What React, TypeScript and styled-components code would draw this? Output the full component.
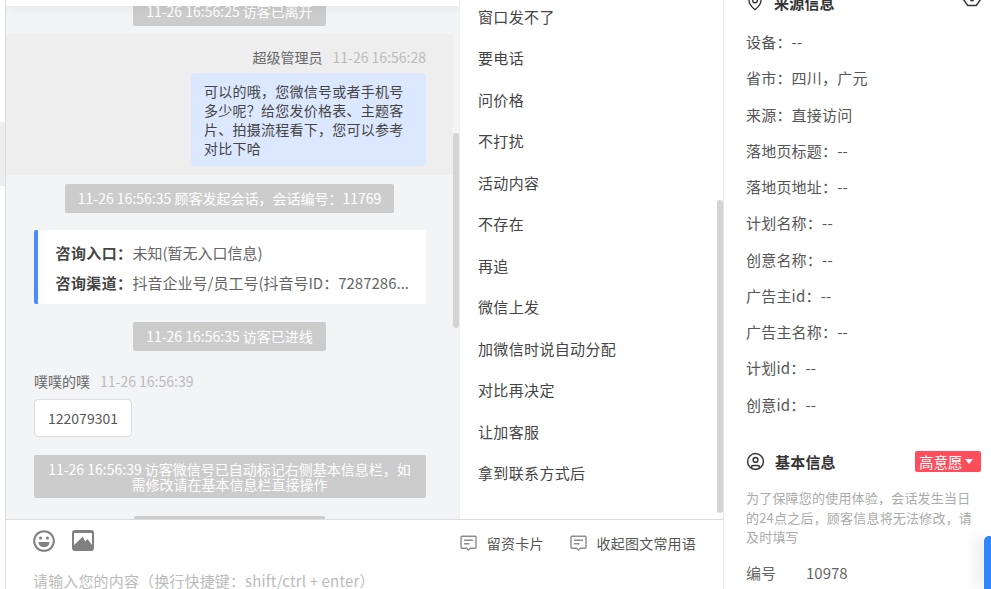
import { createGlobalStyle, styled } from 'styled-components'
import { CircleUser, MapPin } from 'lucide-react'

const GlobalStyle = createGlobalStyle`
  html, body {
    margin: 0;
    padding: 0;
    background: #fff;
  }
  body {
    font-family: "Noto Sans CJK SC", "Noto Sans", sans-serif;
  }
`

const Page = styled.div`
  position: relative;
  display: flex;
  width: 991px;
  height: 589px;
  overflow: hidden;
  background: #fff;
`

const Gutter = styled.div`
  flex: 0 0 5px;
  padding-top: 122px;
`

const GutterMark = styled.div`
  height: 64px;
  background: #eee;
`

const Center = styled.div`
  flex: 0 0 719px;
  display: flex;
  flex-direction: column;
  box-sizing: border-box;
  border-left: 1px solid #ddd;
  border-right: 1px solid #e4e4e4;
`

const Panes = styled.div`
  flex: 0 0 519px;
  display: flex;
  overflow: hidden;
`

const Chat = styled.div`
  position: relative;
  flex: 0 0 453px;
  overflow: hidden;
  background: #f3f4f6;
`

const TopShade = styled.div`
  position: relative;
  z-index: 2;
  height: 6px;
  background: #fff;
  box-shadow: 0 2px 8px rgba(0, 0, 0, 0.08);
`

// scrolled list: the first tag sits partly under the top shade
const Messages = styled.div`
  display: flex;
  flex-direction: column;
  align-items: center;
  width: 447px;
  margin-top: -9px;
`

const ChatThumb = styled.div`
  position: absolute;
  top: 133px;
  right: 0;
  width: 6px;
  height: 195px;
  border-radius: 3px;
  background: #d4d4d4;
`

const SysTag = styled.div<{ $wide?: boolean }>`
  box-sizing: border-box;
  flex: none;
  width: ${(p) => (p.$wide ? '392px' : 'auto')};
  min-width: 191px;
  min-height: 29px;
  margin-bottom: ${(p) => (p.$wide ? '18px' : '17px')};
  padding: 7px 13px;
  border-radius: 2px;
  background: #ccc;
  color: #fff;
  font-size: 14px;
  line-height: ${(p) => (p.$wide ? '14.5px' : '15px')};
  text-align: center;
`

const AdminBlock = styled.div`
  align-self: stretch;
  display: flex;
  flex-direction: column;
  align-items: flex-end;
  margin: -9px 0 9px;
  padding: 14px 27px 9px 0;
  background: #eee;
`

const Sender = styled.div<{ $right?: boolean }>`
  margin-bottom: ${(p) => (p.$right ? '6px' : '8px')};
  color: #666;
  font-size: 14px;
  line-height: 19px;
`

const Time = styled.span`
  margin-left: 10px;
  color: #bbb;
`

const Bubble = styled.div`
  box-sizing: border-box;
  width: 235px;
  padding: 9px 13px 8px;
  border-radius: 4px;
  background: #dbe8ff;
  color: #444;
  font-size: 14px;
  line-height: 19px;
  letter-spacing: 0.25px;
`

const EntryCard = styled.div`
  box-sizing: border-box;
  flex: none;
  width: 392px;
  height: 74px;
  margin-bottom: 18px;
  padding: 8px 18px 0;
  border-left: 4px solid #4a8cff;
  border-radius: 2px;
  background: #fff;
`

const EntryRow = styled.div`
  height: 30px;
  color: #666;
  font-size: 15px;
  line-height: 30px;
  white-space: nowrap;
  b {
    color: #444;
    font-weight: 700;
    letter-spacing: 0.4px;
  }
`

const VisitorBlock = styled.div`
  align-self: stretch;
  display: flex;
  flex-direction: column;
  align-items: flex-start;
  margin-bottom: 18px;
  padding: 4px 0 0 28px;
`

const PlainBubble = styled.div`
  box-sizing: border-box;
  width: 98px;
  height: 38px;
  border: 1px solid #ddd;
  border-radius: 4px;
  background: #fff;
  color: #555;
  font-size: 14px;
  line-height: 36px;
  text-align: center;
`

const Quick = styled.div`
  position: relative;
  flex: 1;
  overflow: hidden;
  background: #fff;
  border-left: 1px solid #eee;
`

const QuickList = styled.div`
  margin-top: -4.5px;
  padding-left: 18px;
`

const QuickItem = styled.div`
  height: 41.5px;
  color: #444;
  font-size: 15px;
  line-height: 41.5px;
  letter-spacing: 0.35px;
`

const QuickThumb = styled.div`
  position: absolute;
  top: 200px;
  right: 0;
  width: 6px;
  height: 313px;
  border-radius: 3px;
  background: #d4d4d4;
`

const Composer = styled.div`
  flex: 1;
  overflow: hidden;
  padding: 10px 27px 0;
  border-top: 1px solid #ddd;
  background: #fff;
`

const ComposerBar = styled.div`
  display: flex;
  align-items: flex-start;
  justify-content: space-between;
`

const ComposerIcons = styled.div`
  display: flex;
  gap: 17px;
`

const ComposerActions = styled.div`
  display: flex;
  gap: 26px;
  padding-top: 5px;
`

const ComposerAction = styled.div`
  display: flex;
  align-items: center;
  gap: 10px;
  color: #555;
  font-size: 14px;
  line-height: 16px;
  letter-spacing: 0.2px;
`

const Placeholder = styled.div`
  margin-top: 18px;
  color: #bbb;
  font-size: 15px;
  line-height: 22px;
  letter-spacing: 0.15px;
  white-space: nowrap;
`

const Side = styled.div`
  flex: 1;
  box-sizing: border-box;
  padding: 0 10px 0 22px;
  overflow: hidden;
`

const SectionHead = styled.div`
  display: flex;
  align-items: center;
  justify-content: space-between;
  height: 20px;
  margin-top: -8px;
`

const SectionTitle = styled.div`
  display: flex;
  align-items: center;
  gap: 10px;
  color: #333;
  font-size: 15px;
  font-weight: 700;
  letter-spacing: 0.2px;
`

const SourceList = styled.div`
  margin-top: 12px;
`

const SourceRow = styled.div`
  height: 36.25px;
  color: #555;
  font-size: 15px;
  line-height: 36.25px;
  letter-spacing: 0.2px;
`

const BasicHead = styled.div`
  display: flex;
  align-items: center;
  justify-content: space-between;
  height: 22px;
  margin-top: 27.5px;
`

const IntentTag = styled.div`
  display: flex;
  align-items: center;
  gap: 2px;
  box-sizing: border-box;
  width: 66px;
  height: 21px;
  padding-left: 4px;
  border-radius: 2px;
  background: #ff4d5b;
  color: #fff;
  font-size: 14.5px;
`

const Caret = styled.i`
  width: 0;
  height: 0;
  border-left: 4px solid transparent;
  border-right: 4px solid transparent;
  border-top: 5px solid #fff;
`

const Notice = styled.div`
  margin-top: 16px;
  color: #aaa;
  font-size: 13px;
  line-height: 19.5px;
  letter-spacing: 0.2px;
`

const InfoRow = styled.div`
  display: flex;
  gap: 30px;
  margin-top: 16px;
  color: #666;
  font-size: 15px;
  line-height: 20px;
`

// floating widget pinned to the window edge
const FloatTab = styled.div`
  position: absolute;
  top: 536px;
  right: 0;
  width: 7px;
  height: 53px;
  border-top-left-radius: 5px;
  background: #2f86ff;
  box-shadow: -6px 0 14px rgba(0, 0, 0, 0.12);
`

const quickReplies = [
  '窗口发不了', '要电话', '问价格', '不打扰', '活动内容', '不存在',
  '再追', '微信上发', '加微信时说自动分配', '对比再决定', '让加客服', '拿到联系方式后',
]

const sourceRows = [
  '设备：--', '省市：四川，广元', '来源：直接访问', '落地页标题：--', '落地页地址：--', '计划名称：--',
  '创意名称：--', '广告主id：--', '广告主名称：--', '计划id：--', '创意id：--',
]

const CommentIcon = () => (
  <svg width="17" height="16" viewBox="0 0 17 16" fill="none" stroke="#8c8c8c" strokeWidth="1.4">
    <path d="M2 1.2h13a1 1 0 0 1 1 1v10a1 1 0 0 1-1 1h-4.6L8.5 15l-1.9-1.8H2a1 1 0 0 1-1-1v-10a1 1 0 0 1 1-1z" />
    <path d="M4 5.2h9M4 8.8h5.5" />
  </svg>
)

const SmileIcon = () => (
  <svg width="22" height="22" viewBox="0 0 22 22">
    <circle cx="11" cy="11" r="9.8" fill="none" stroke="#808080" strokeWidth="2" />
    <circle cx="7.6" cy="8" r="1.6" fill="#808080" />
    <circle cx="14.4" cy="8" r="1.6" fill="#808080" />
    <path d="M5.5 12h11c0 3.2-2.4 5.2-5.5 5.2S5.500 15.200 5.500 12z" fill="#808080" />
  </svg>
)

const PictureIcon = () => (
  <svg width="22" height="22" viewBox="0 0 22 22">
    <rect x="0" y="0" width="22" height="21" rx="3" fill="#808080" />
    <path d="M2 3h18v12l-4.500-6-2.500 2.500L11 6.500 2 15z" fill="#fff" />
  </svg>
)

const ShieldIcon = () => (
  <svg width="18" height="20" viewBox="0 0 18 20" fill="none" stroke="#333" strokeWidth="1.5">
    <path d="M0.500 7.500l4.200 6h8.600l4.200-6" />
    <circle cx="9" cy="7.500" r="2" fill="#333" stroke="none" />
  </svg>
)

export default function App() {
  return (
    <>
      <GlobalStyle />
      <Page>
        <Gutter>
          <GutterMark />
        </Gutter>
        <Center>
          <Panes>
            <Chat>
              <TopShade />
              <Messages>
                <SysTag>11-26 16:56:25 访客已离开</SysTag>
                <AdminBlock>
                  <Sender $right>
                    超级管理员<Time>11-26 16:56:28</Time>
                  </Sender>
                  <Bubble>可以的哦，您微信号或者手机号多少呢？给您发价格表、主题客片、拍摄流程看下，您可以参考对比下哈</Bubble>
                </AdminBlock>
                <SysTag>11-26 16:56:35 顾客发起会话，会话编号：11769</SysTag>
                <EntryCard>
                  <EntryRow><b>咨询入口：</b>未知(暂无入口信息)</EntryRow>
                  <EntryRow><b>咨询渠道：</b>抖音企业号/员工号(抖音号ID：7287286...</EntryRow>
                </EntryCard>
                <SysTag>11-26 16:56:35 访客已进线</SysTag>
                <VisitorBlock>
                  <Sender>
                    噗噗的噗<Time>11-26 16:56:39</Time>
                  </Sender>
                  <PlainBubble>122079301</PlainBubble>
                </VisitorBlock>
                <SysTag $wide>11-26 16:56:39 访客微信号已自动标记右侧基本信息栏，如需修改请在基本信息栏直接操作</SysTag>
                <SysTag />
              </Messages>
              <ChatThumb />
            </Chat>
            <Quick>
              <QuickList>
                {quickReplies.map((text) => (
                  <QuickItem key={text}>{text}</QuickItem>
                ))}
              </QuickList>
              <QuickThumb />
            </Quick>
          </Panes>
          <Composer>
            <ComposerBar>
              <ComposerIcons>
                <SmileIcon />
                <PictureIcon />
              </ComposerIcons>
              <ComposerActions>
                <ComposerAction><CommentIcon />留资卡片</ComposerAction>
                <ComposerAction><CommentIcon />收起图文常用语</ComposerAction>
              </ComposerActions>
            </ComposerBar>
            <Placeholder>请输入您的内容（换行快捷键：shift/ctrl + enter）</Placeholder>
          </Composer>
        </Center>
        <Side>
          <SectionHead>
            <SectionTitle><MapPin size={18} color="#333" strokeWidth={1.8} />来源信息</SectionTitle>
            <ShieldIcon />
          </SectionHead>
          <SourceList>
            {sourceRows.map((text) => (
              <SourceRow key={text}>{text}</SourceRow>
            ))}
          </SourceList>
          <BasicHead>
            <SectionTitle><CircleUser size={19} color="#333" strokeWidth={1.8} />基本信息</SectionTitle>
            <IntentTag>高意愿<Caret /></IntentTag>
          </BasicHead>
          <Notice>为了保障您的使用体验，会话发生当日的24点之后，顾客信息将无法修改，请及时填写</Notice>
          <InfoRow><span>编号</span><span>10978</span></InfoRow>
        </Side>
        <FloatTab />
      </Page>
    </>
  )
}
